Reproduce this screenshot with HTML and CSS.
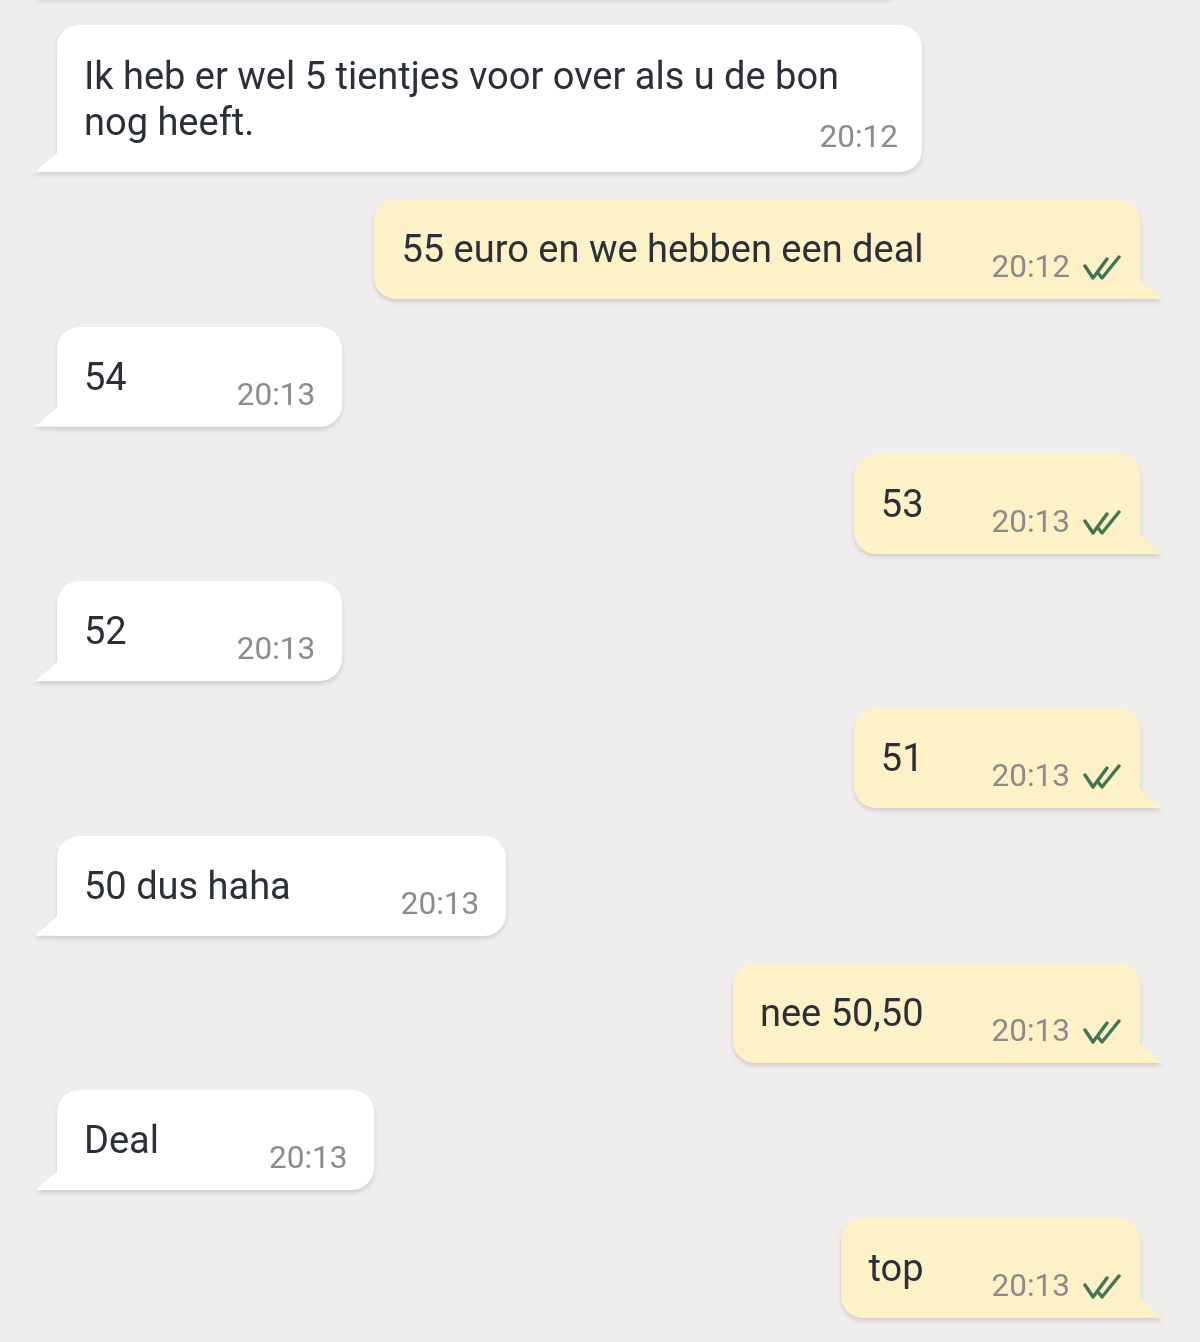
FILE: index.html
```html
<!DOCTYPE html>
<html lang="nl">
<head>
    <meta charset="UTF-8">
    <meta name="viewport" content="width=device-width, initial-scale=1.0">
    <title>Chat</title>
    <link rel="stylesheet" href="styles.css">
</head>
<body>
    <main class="chat">
        <!-- vorig bericht, alleen de onderkant is zichtbaar -->
        <div class="row in prev">
            <div class="bubble"></div>
        </div>

        <div class="row in">
            <div class="bubble long">
                <span class="text">Ik heb er wel 5 tientjes voor over als u de bon<br>nog heeft.</span>
                <span class="time">20:12</span>
            </div>
        </div>

        <div class="row out">
            <div class="bubble">
                <span class="text">55 euro en we hebben een deal</span>
                <span class="time">20:12</span>
                <svg class="ticks" viewBox="0 0 38 26"><path d="M2 11 L10 23 L24 4"/><path d="M15 18 L19 23 L36 2"/></svg>
            </div>
        </div>

        <div class="row in">
            <div class="bubble">
                <span class="text">54</span>
                <span class="time">20:13</span>
            </div>
        </div>

        <div class="row out">
            <div class="bubble">
                <span class="text">53</span>
                <span class="time">20:13</span>
                <svg class="ticks" viewBox="0 0 38 26"><path d="M2 11 L10 23 L24 4"/><path d="M15 18 L19 23 L36 2"/></svg>
            </div>
        </div>

        <div class="row in">
            <div class="bubble">
                <span class="text">52</span>
                <span class="time">20:13</span>
            </div>
        </div>

        <div class="row out">
            <div class="bubble">
                <span class="text">51</span>
                <span class="time">20:13</span>
                <svg class="ticks" viewBox="0 0 38 26"><path d="M2 11 L10 23 L24 4"/><path d="M15 18 L19 23 L36 2"/></svg>
            </div>
        </div>

        <div class="row in">
            <div class="bubble">
                <span class="text">50 dus haha</span>
                <span class="time">20:13</span>
            </div>
        </div>

        <div class="row out">
            <div class="bubble">
                <span class="text">nee 50,50</span>
                <span class="time">20:13</span>
                <svg class="ticks" viewBox="0 0 38 26"><path d="M2 11 L10 23 L24 4"/><path d="M15 18 L19 23 L36 2"/></svg>
            </div>
        </div>

        <div class="row in">
            <div class="bubble">
                <span class="text">Deal</span>
                <span class="time">20:13</span>
            </div>
        </div>

        <div class="row out">
            <div class="bubble">
                <span class="text">top</span>
                <span class="time">20:13</span>
                <svg class="ticks" viewBox="0 0 38 26"><path d="M2 11 L10 23 L24 4"/><path d="M15 18 L19 23 L36 2"/></svg>
            </div>
        </div>
    </main>
</body>
</html>
```

FILE: styles.css
```css
html, body {
    margin: 0;
    padding: 0;
    height: 100%;
    overflow: hidden;
}

body {
    font-family: Roboto, "Noto Sans", Arial, sans-serif;
    background-color: #efeeec;
    color: #2a2f38;
}

.chat {
    display: flex;
    flex-direction: column;
    gap: 27.3px;
}

.row {
    display: flex;
}

.row.in {
    justify-content: flex-start;
    padding-left: 57px;
}

.row.out {
    justify-content: flex-end;
    padding-right: 60px;
}

.bubble {
    position: relative;
    display: flex;
    align-items: flex-end;
    box-sizing: border-box;
    min-height: 100px;
    padding: 27px 27px 15px 27px;
    filter: drop-shadow(0 3px 2px rgba(0, 0, 0, 0.13));
}

.in .bubble {
    background-color: #ffffff;
    border-radius: 22px 22px 22px 0;
}

.out .bubble {
    background-color: #fdf1c8;
    border-radius: 22px 22px 0 22px;
    padding-right: 19px;
}

/* staartje onderaan de ballon */
.bubble::after {
    content: "";
    position: absolute;
    bottom: 0;
    width: 23px;
    height: 20px;
    background-color: inherit;
}

.in .bubble::after {
    left: -22px;
    clip-path: polygon(0 100%, 100% 0, 100% 100%);
}

.out .bubble::after {
    right: -22px;
    clip-path: polygon(0 0, 100% 100%, 0 100%);
}

.text {
    font-size: 38px;
    line-height: 46px;
    margin-bottom: 12px;
    white-space: nowrap;
}

.time {
    font-size: 31.5px;
    line-height: 34px;
    color: #8b8b8b;
}

.in .time {
    margin-left: 110px;
}

.out .time {
    margin-left: 68px;
}

.ticks {
    width: 38px;
    height: 26px;
    margin-left: 13px;
    margin-bottom: 3px;
    fill: none;
    stroke: #3f7752;
    stroke-width: 3.4;
    stroke-linecap: round;
    stroke-linejoin: round;
}

.row.prev {
    margin-top: -102.3px;
}

.prev .bubble {
    width: 848px;
}

.bubble.long {
    width: 865px;
    flex-direction: column;
    align-items: flex-start;
    padding: 28px 24px 18px 27px;
}

.bubble.long .time {
    align-self: flex-end;
    margin-top: -25px;
    margin-left: 0;
}

.bubble.long .text {
    margin-bottom: 0;
}
```
